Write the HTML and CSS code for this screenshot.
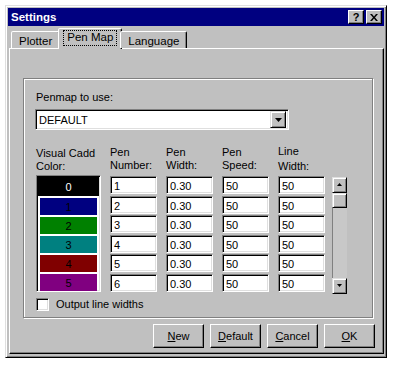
FILE: index.html
```html
<!DOCTYPE html>
<html lang="en">
<head>
  <meta charset="UTF-8">
  <title>Settings</title>
  <link rel="stylesheet" href="styles.css">
</head>
<body>
  <div class="window">
    <div class="titlebar">
      <span class="title">Settings</span>
      <div class="title-buttons">
        <span class="tbtn">?</span>
        <span class="tbtn close">
          <svg width="8" height="7" viewBox="0 0 8 7"><path d="M0 0h2l2 2.5L6 0h2L5 3.5 8 7H6L4 4.5 2 7H0l3-3.5z" fill="#000"/></svg>
        </span>
      </div>
    </div>

    <div class="tabs">
      <div class="tab">Plotter</div>
      <div class="tab active"><span class="focus">Pen Map</span></div>
      <div class="tab">Language</div>
    </div>

    <div class="panel">
      <div class="group">
        <div class="label">Penmap to use:</div>
        <div class="combo">
          <span class="combo-text">DEFAULT</span>
          <span class="combo-btn">
            <svg width="7" height="4" viewBox="0 0 7 4"><path d="M0 0h7L3.5 4z" fill="#000"/></svg>
          </span>
        </div>

        <div class="pens">
          <div class="col-color">
            <div class="head">Visual Cadd<br>Color:</div>
            <div class="colorlist">
              <div class="crow sel" style="background:#000">0</div>
              <div class="crow" style="background:#000080">1</div>
              <div class="crow" style="background:#008000">2</div>
              <div class="crow" style="background:#008080">3</div>
              <div class="crow" style="background:#800000">4</div>
              <div class="crow" style="background:#800080">5</div>
            </div>
          </div>

          <div class="col">
            <div class="head">Pen<br>Number:</div>
            <div class="field">1</div>
            <div class="field">2</div>
            <div class="field">3</div>
            <div class="field">4</div>
            <div class="field">5</div>
            <div class="field">6</div>
          </div>

          <div class="col">
            <div class="head">Pen<br>Width:</div>
            <div class="field">0.30</div>
            <div class="field">0.30</div>
            <div class="field">0.30</div>
            <div class="field">0.30</div>
            <div class="field">0.30</div>
            <div class="field">0.30</div>
          </div>

          <div class="col">
            <div class="head">Pen<br>Speed:</div>
            <div class="field">50</div>
            <div class="field">50</div>
            <div class="field">50</div>
            <div class="field">50</div>
            <div class="field">50</div>
            <div class="field">50</div>
          </div>

          <div class="col">
            <div class="head raised">Line<br>Width:</div>
            <div class="field">50</div>
            <div class="field">50</div>
            <div class="field">50</div>
            <div class="field">50</div>
            <div class="field">50</div>
            <div class="field">50</div>
          </div>

          <div class="scroll">
            <div class="sbtn">
              <svg width="5" height="3" viewBox="0 0 5 3"><path d="M2.5 0L5 3H0z" fill="#000"/></svg>
            </div>
            <div class="thumb"></div>
            <div class="track"></div>
            <div class="sbtn">
              <svg width="5" height="3" viewBox="0 0 5 3"><path d="M0 0h5L2.5 3z" fill="#000"/></svg>
            </div>
          </div>
        </div>

        <label class="check">
          <span class="box"></span>
          <span>Output line widths</span>
        </label>
      </div>

      <div class="actions">
        <button><u>N</u>ew</button>
        <button><u>D</u>efault</button>
        <button><u>C</u>ancel</button>
        <button><u>O</u>K</button>
      </div>
    </div>
  </div>
</body>
</html>
```

FILE: styles.css
```css
:root {
  --face: #c0c0c0;
  --shadow: #808080;
  --light: #dfdfdf;
  --navy: #000080;
}
body {
  margin: 0;
  background: #fff;
  font-family: "Liberation Sans", Arial, sans-serif;
  font-size: 11px;
  color: #000;
}
.window {
  margin: 5px 0 0 5px;
  width: 382px;
  height: 353px;
  box-sizing: border-box;
  padding: 1px;
  background: var(--face);
  border: 1px solid;
  border-color: var(--light) #000 #000 var(--light);
  box-shadow: inset 1px 1px #fff, inset -1px -1px var(--shadow);
}
.titlebar {
  margin: 1px;
  height: 18px;
  background: var(--navy);
  display: flex;
  align-items: center;
  justify-content: space-between;
  padding: 0 2px 0 3px;
}
.title {
  color: #fff;
  font-weight: bold;
  font-size: 11.5px;
}
.title-buttons {
  display: flex;
  gap: 2px;
}
.tbtn {
  width: 16px;
  height: 14px;
  box-sizing: border-box;
  background: var(--face);
  border: 1px solid;
  border-color: #fff #000 #000 #fff;
  box-shadow: inset -1px -1px var(--shadow);
  display: flex;
  align-items: center;
  justify-content: center;
  font-weight: bold;
  font-size: 11px;
  line-height: 1;
}
.tabs {
  display: flex;
  align-items: flex-end;
  height: 20px;
  margin: 2px 0 0 2px;
  padding-left: 2px;
  position: relative;
  z-index: 1;
}
.tab {
  height: 17px;
  box-sizing: border-box;
  padding: 3px 7px 0;
  border: 1px solid;
  border-bottom: none;
  border-color: #fff #000 transparent #fff;
  border-radius: 2px 2px 0 0;
  box-shadow: inset -1px 0 var(--shadow);
  background: var(--face);
  font-size: 11.5px;
}
.tab.active {
  height: 21px;
  margin: 0 -2px -1px;
  padding: 2px 5px 0;
}
.focus {
  display: inline-block;
  outline: 1px dotted #000;
  padding: 0 3px 2px;
}
.panel {
  margin-left: 2px;
  width: 375px;
  height: 306px;
  box-sizing: border-box;
  border: 1px solid;
  border-color: #fff #000 #000 #fff;
  box-shadow: inset -1px -1px var(--shadow);
  padding: 29px 10px 0 13px;
}
.group {
  height: 240px;
  box-sizing: border-box;
  border: 1px solid var(--shadow);
  box-shadow: inset 1px 1px #fff, 1px 1px #fff;
  padding: 12px 0 0 12px;
}
.label {
  height: 18px;
}
.combo {
  width: 254px;
  height: 21px;
  margin-left: -1px;
  box-sizing: border-box;
  background: #fff;
  border: 1px solid;
  border-color: var(--shadow) #fff #fff var(--shadow);
  box-shadow: inset 1px 1px #000, inset -1px -1px var(--light);
  display: flex;
  align-items: center;
  justify-content: space-between;
  padding: 0 2px 0 3px;
}
.combo-btn {
  width: 16px;
  height: 17px;
  box-sizing: border-box;
  background: var(--face);
  border: 1px solid;
  border-color: var(--light) #000 #000 var(--light);
  box-shadow: inset 1px 1px #fff, inset -1px -1px var(--shadow);
  display: flex;
  align-items: center;
  justify-content: center;
}
.pens {
  display: flex;
  align-items: flex-end;
  margin-top: 14px;
}
.head {
  line-height: 13px;
  height: 30px;
}
.head.raised {
  line-height: 15px;
  height: 32px;
}
.col-color {
  width: 65px;
  margin-right: 9px;
}
.colorlist {
  height: 117px;
  margin-top: -2px;
  box-sizing: border-box;
  background: #fff;
  border: 1px solid;
  border-color: var(--shadow) #fff #fff var(--shadow);
  box-shadow: inset 1px 1px #000, inset -1px -1px var(--light);
  padding: 3px 3px 0;
}
.crow {
  height: 17px;
  margin-bottom: 2px;
  text-align: center;
  line-height: 18px;
}
.crow.sel {
  color: #fff;
  margin: -2px -2px 2px;
  height: 19px;
  line-height: 20px;
}
.col {
  width: 47px;
  margin-right: 9px;
}
.field {
  height: 18px;
  box-sizing: border-box;
  margin-bottom: 1.6px;
  background: #fff;
  border: 1px solid;
  border-color: var(--shadow) #fff #fff var(--shadow);
  box-shadow: inset 1px 1px #000, inset -1px -1px var(--light);
  padding: 2px 0 0 3px;
  line-height: 14px;
}
.field:last-child {
  margin-bottom: 0;
}
.scroll {
  width: 15px;
  height: 117px;
  margin: 0 0 -2px -2px;
  display: flex;
  flex-direction: column;
  background: #c8c8c8;
}
.sbtn, .thumb {
  height: 16px;
  flex: none;
  box-sizing: border-box;
  background: var(--face);
  border: 1px solid;
  border-color: var(--light) #000 #000 var(--light);
  box-shadow: inset 1px 1px #fff, inset -1px -1px var(--shadow);
  display: flex;
  align-items: center;
  justify-content: center;
}
.thumb {
  height: 15px;
}
.track {
  flex: 1;
  border-left: 1px solid var(--shadow);
}
.check {
  display: flex;
  align-items: center;
  gap: 7px;
  margin-top: 6px;
}
.box {
  width: 13px;
  height: 13px;
  box-sizing: border-box;
  background: #fff;
  border: 1px solid;
  border-color: var(--shadow) #fff #fff var(--shadow);
  box-shadow: inset 1px 1px #000, inset -1px -1px var(--light);
}
.actions {
  display: flex;
  justify-content: flex-end;
  gap: 6px;
  margin: 6px -2px 0 0;
}
button {
  width: 51px;
  height: 24px;
  box-sizing: border-box;
  background: var(--face);
  border: 1px solid;
  border-color: #fff #000 #000 #fff;
  box-shadow: inset -1px -1px var(--shadow);
  font-family: "Liberation Sans", Arial, sans-serif;
  font-size: 11px;
  padding: 0;
  color: #000;
}
```
